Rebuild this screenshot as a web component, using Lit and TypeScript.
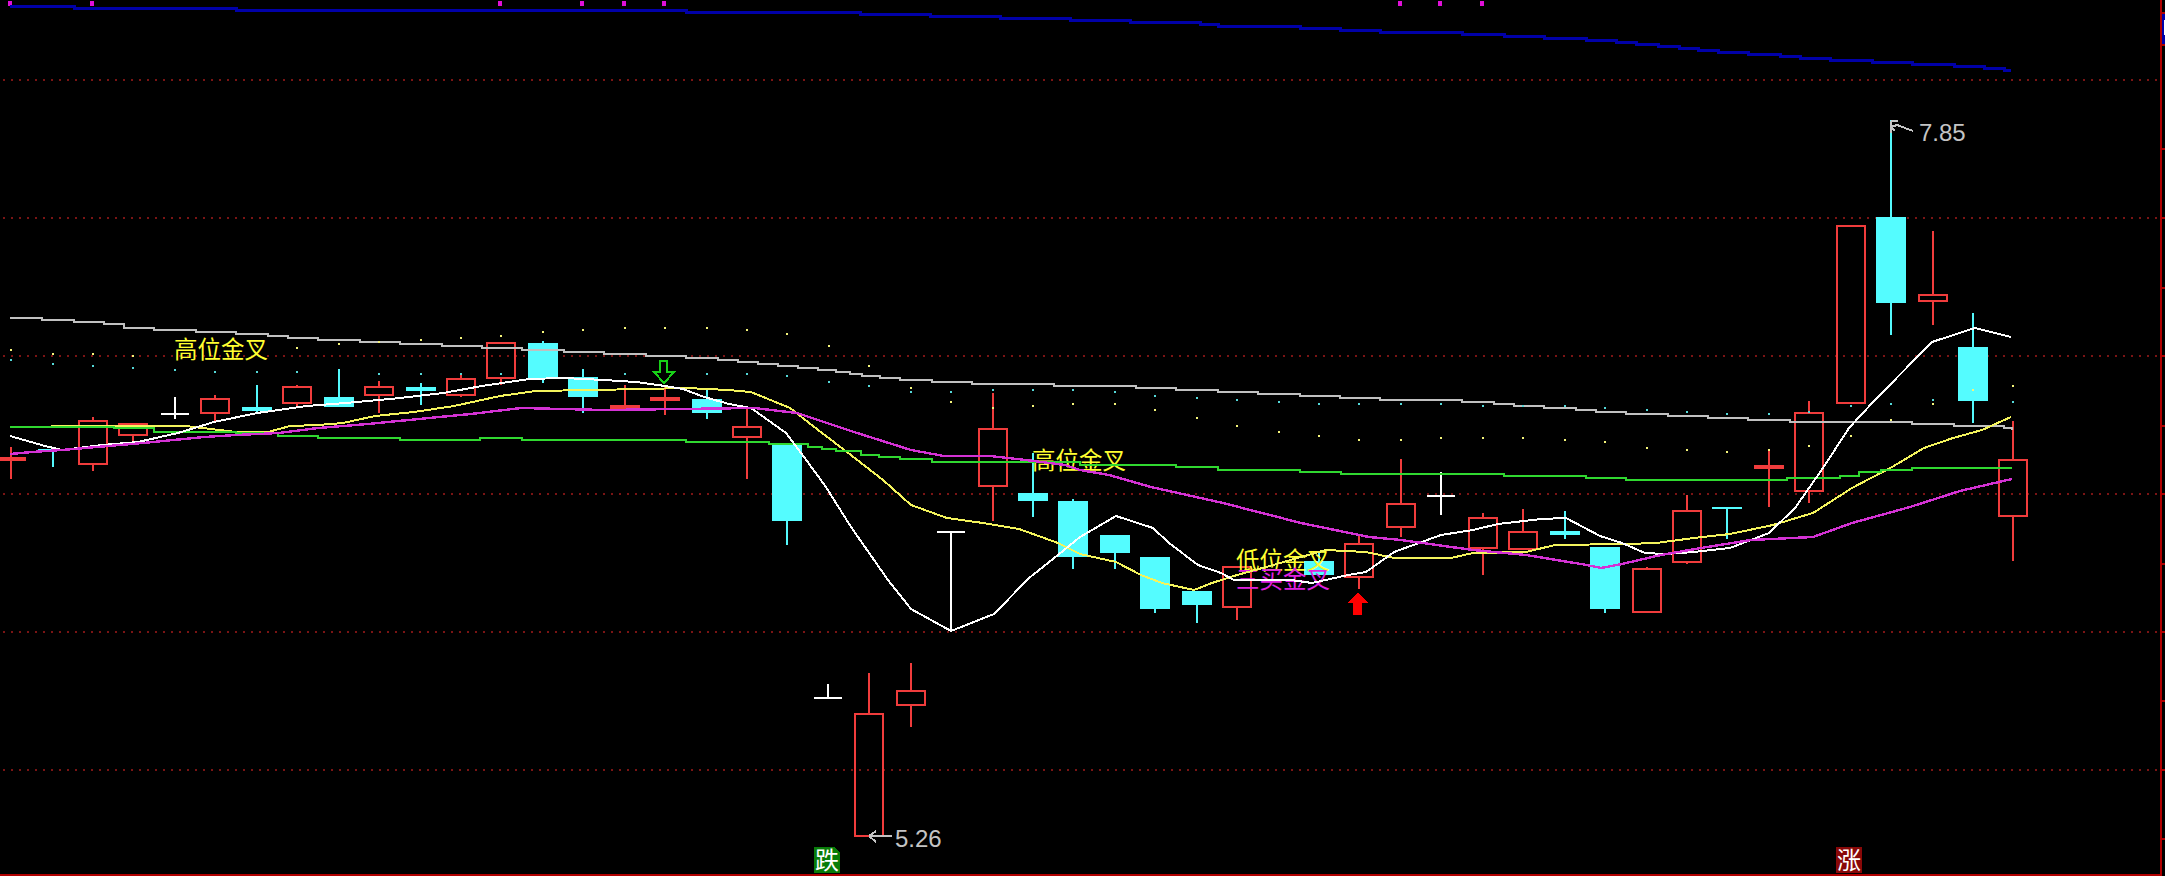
import { LitElement, html, svg, css } from "lit";
import { customElement } from "lit/decorators.js";

type Kind = "up" | "down" | "red" | "white" | "cyan";
interface Candle { x: number; hi: number; lo: number; top: number; bot: number; kind: Kind; }
type Pt = [number, number];

const c = (x: number, hi: number, lo: number, top: number, bot: number, kind: Kind): Candle => ({ x, hi, lo, top, bot, kind });

const CANDLES: Candle[] = [
  c(11, 447, 479, 457, 461, "red"), c(53, 448, 467, 449, 451, "cyan"), c(93, 417, 471, 421, 464, "up"),
  c(133, 424, 442, 424, 435, "up"), c(175, 397, 419, 413, 415, "white"), c(215, 395, 421, 399, 413, "up"),
  c(257, 385, 414, 407, 411, "down"), c(297, 385, 408, 387, 403, "up"), c(339, 369, 407, 397, 407, "down"),
  c(379, 381, 413, 387, 395, "up"), c(421, 383, 405, 387, 391, "down"), c(461, 373, 397, 379, 395, "up"),
  c(501, 343, 385, 343, 378, "up"), c(543, 341, 383, 343, 378, "down"), c(583, 369, 413, 377, 397, "down"),
  c(625, 385, 410, 405, 410, "red"), c(665, 387, 415, 397, 401, "red"), c(707, 390, 419, 399, 413, "down"),
  c(747, 407, 479, 427, 437, "up"), c(787, 443, 545, 443, 521, "down"), c(828, 684, 698, 697, 699, "white"),
  c(869, 673, 836, 714, 836, "up"), c(911, 663, 727, 691, 705, "up"), c(951, 531, 631, 531, 533, "white"),
  c(993, 393, 521, 429, 486, "up"), c(1033, 453, 517, 493, 501, "down"), c(1073, 499, 569, 501, 557, "down"),
  c(1115, 535, 569, 535, 553, "down"), c(1155, 557, 613, 557, 609, "down"), c(1197, 591, 623, 591, 605, "down"),
  c(1237, 567, 620, 567, 607, "up"), c(1319, 552, 575, 561, 575, "down"), c(1359, 534, 589, 544, 577, "up"),
  c(1401, 459, 537, 504, 527, "up"), c(1441, 472, 515, 495, 497, "white"), c(1483, 513, 575, 518, 548, "up"),
  c(1523, 509, 549, 532, 549, "up"), c(1565, 511, 539, 531, 535, "down"), c(1605, 547, 613, 547, 609, "down"),
  c(1647, 567, 612, 569, 612, "up"), c(1687, 495, 564, 511, 562, "up"), c(1727, 507, 539, 507, 509, "cyan"),
  c(1769, 449, 507, 465, 469, "red"), c(1809, 401, 503, 413, 491, "up"), c(1851, 226, 403, 226, 403, "up"),
  c(1891, 120, 335, 217, 303, "down"), c(1933, 231, 325, 295, 301, "up"), c(1973, 313, 423, 347, 401, "down"),
  c(2013, 421, 561, 460, 516, "up"),
];

const GRAY: Pt[] = [[10,318],[42,320],[74,322],[104,324],[124,328],[154,330],[196,332],[236,334],[268,336],[288,338],[318,340],[360,342],[400,344],[442,346],[482,348],[522,350],[564,352],[604,354],[646,356],[686,358],[718,360],[738,362],[758,364],[778,366],[798,368],[818,370],[836,372],[850,374],[862,376],[880,378],[900,380],[932,382],[972,384],[1054,386],[1136,388],[1176,390],[1218,392],[1258,394],[1300,396],[1340,398],[1380,400],[1462,402],[1494,404],[1514,406],[1544,408],[1576,410],[1596,412],[1626,414],[1668,416],[1708,418],[1748,420],[1790,422],[1912,424],[1954,426],[2004,428],[2012,430]];
const BLUE: Pt[] = [[10,6],[74,8],[236,10],[686,12],[860,14],[930,16],[1000,18],[1070,20],[1130,22],[1200,24],[1218,26],[1300,28],[1340,30],[1380,32],[1462,34],[1504,36],[1544,38],[1586,40],[1616,42],[1636,44],[1658,46],[1679,48],[1698,50],[1718,52],[1748,54],[1780,56],[1800,58],[1830,60],[1872,62],[1912,64],[1954,66],[1984,68],[2004,70],[2011,70]];
const GREEN: Pt[] = [[10,427],[114,428],[154,432],[236,433],[278,436],[318,438],[400,440],[480,438],[522,440],[686,442],[769,444],[808,447],[822,449],[836,451],[861,455],[879,457],[900,459],[932,462],[1080,465],[1176,467],[1218,470],[1300,472],[1341,474],[1504,476],[1586,478],[1626,480],[1787,478],[1840,476],[1859,472],[1881,470],[1912,468],[2012,468]];
const WHITE: Pt[] = [[10,436],[45,446],[62,450],[102,445],[138,442],[178,433],[214,422],[257,413],[307,406],[346,403],[400,398],[443,393],[482,386],[529,379],[563,378],[604,380],[636,382],[665,386],[683,389],[704,397],[729,404],[751,408],[772,423],[786,433],[804,457],[826,487],[851,527],[888,580],[911,609],[951,631],[994,614],[1029,578],[1058,555],[1080,537],[1116,516],[1153,528],[1169,543],[1198,565],[1221,573],[1234,580],[1291,580],[1312,583],[1348,575],[1366,572],[1394,552],[1441,535],[1473,530],[1498,524],[1541,519],[1566,518],[1600,536],[1622,543],[1645,553],[1665,554],[1694,552],[1730,548],[1769,533],[1795,508],[1823,468],[1849,428],[1874,401],[1932,342],[1975,328],[2011,337]];
const YELLOW: Pt[] = [[10,427],[32,427],[71,426],[186,426],[236,432],[268,432],[290,426],[318,425],[343,423],[375,416],[414,412],[454,406],[500,396],[536,391],[644,389],[686,388],[728,390],[751,392],[790,408],[822,433],[847,452],[883,480],[911,505],[947,518],[983,523],[1019,529],[1058,543],[1080,554],[1116,562],[1141,575],[1162,583],[1194,590],[1212,583],[1237,575],[1266,567],[1294,559],[1326,550],[1366,552],[1394,558],[1451,558],[1473,553],[1526,552],[1555,545],[1626,544],[1656,543],[1694,538],[1730,534],[1773,525],[1813,513],[1852,488],[1892,467],[1924,448],[1953,438],[1982,430],[2011,417]];
const PINK: Pt[] = [[10,454],[32,452],[62,450],[143,443],[204,437],[236,435],[279,433],[318,428],[368,424],[429,418],[471,414],[521,408],[604,410],[754,408],[797,413],[854,432],[911,450],[944,456],[990,456],[1026,460],[1065,465],[1080,470],[1109,475],[1151,487],[1223,503],[1301,523],[1369,537],[1401,540],[1437,545],[1473,550],[1526,555],[1587,565],[1601,568],[1622,564],[1661,555],[1701,548],[1751,540],[1813,537],[1852,523],[1910,507],[1960,491],[2012,479]];

const YELLOW_DOTS: Pt[] = [[11,350],[53,354],[93,354],[133,356],[297,348],[339,344],[379,342],[421,340],[461,338],[501,336],[543,332],[583,330],[625,328],[665,328],[707,328],[747,330],[787,334],[829,346],[869,366],[911,388],[951,402],[993,408],[1033,406],[1073,404],[1115,404],[1155,410],[1197,418],[1237,426],[1279,432],[1319,436],[1359,440],[1401,440],[1441,438],[1483,438],[1523,438],[1565,440],[1605,442],[1647,448],[1687,450],[1727,452],[1769,450],[1809,446],[1851,436],[1891,420],[1933,404],[1973,390],[2013,386]];
const CYAN_DOTS: Pt[] = [[11,360],[53,364],[93,366],[133,368],[175,370],[215,372],[257,372],[297,372],[379,374],[421,374],[461,374],[501,374],[625,374],[707,374],[747,374],[787,376],[829,382],[869,386],[911,392],[951,392],[993,390],[1033,390],[1073,390],[1115,392],[1155,396],[1197,398],[1237,400],[1279,402],[1319,404],[1359,404],[1401,404],[1441,404],[1483,406],[1523,406],[1565,406],[1605,408],[1647,410],[1687,412],[1727,414],[1769,414],[1809,412],[1851,406],[1891,404],[1933,400],[2013,402]];

const GRID = [80, 218, 356, 494, 632, 770];
const TICKS = [149, 218, 288, 356, 426, 494, 564, 632, 701, 770, 839];
const TOP_MARKS = [10, 92, 500, 582, 624, 664, 1400, 1440, 1482];

const poly = (p: Pt[]) => p.map((q) => q.join(",")).join(" ");
const steps = (p: Pt[]) => p.reduce((d, q, i) => (i === 0 ? `M${q[0]} ${q[1]}` : `${d}H${q[0]}V${q[1]}`), "");

@customElement("app-root")
export class AppRoot extends LitElement {
  static styles = css`
    :host { display: block; width: 2165px; height: 876px; background: #000; overflow: hidden; }
    .chart { display: block; width: 2165px; height: 876px; shape-rendering: crispEdges; }
    .grid { stroke: #7a1414; stroke-width: 2; stroke-dasharray: 2 6; fill: none; }
    .frame { stroke: #b00000; stroke-width: 2; fill: none; }
    .tick { fill: #b00000; }
    .line { fill: none; stroke-width: 2; }
    .gray { stroke: #c0c0c0; }
    .blue { stroke: #0000a8; stroke-width: 3; }
    .green { stroke: #30d830; stroke-width: 2.6; }
    .white { stroke: #ffffff; }
    .yellow { stroke: #f4f45c; }
    .pink { stroke: #d432d4; stroke-width: 2.4; }
    .wick-up, .wick-red { stroke: #f03c3c; stroke-width: 2; }
    .wick-down, .wick-cyan { stroke: #54f8fc; stroke-width: 2; }
    .wick-white { stroke: #fff; stroke-width: 2; }
    .body-up { fill: none; stroke: #f03c3c; stroke-width: 2; }
    .body-red { fill: #f03c3c; }
    .body-down, .body-cyan { fill: #54fcff; }
    .body-white { fill: #fff; }
    .dot-y { fill: #f4f47a; }
    .dot-c { fill: #54d8d8; }
    .mark { fill: #e010d8; }
    .label { font-family: "Noto Sans CJK SC", "Noto Sans CJK JP", sans-serif; font-size: 23.5px; shape-rendering: auto; }
    .label-yellow { fill: #ffff30; }
    .label-pink { fill: #e020e0; }
    .value { font-family: "Liberation Sans", Arial, sans-serif; font-size: 24px; fill: #c4c4c4; }
    .pointer { fill: none; stroke: #c4c4c4; stroke-width: 2; }
    .arrow-down { fill: none; stroke: #18d018; stroke-width: 2; }
    .arrow-up { fill: #ff0000; }
    .badge-fall { fill: #087c08; }
    .badge-rise { fill: #880808; }
    .badge-text { font-family: "Noto Sans CJK SC", "Noto Sans CJK JP", sans-serif; font-size: 24px; fill: #fff; font-weight: 400; }
    .edge-blue { fill: #0000a8; }
    .edge-white { fill: #fff; }
  `;

  private candle(k: Candle) {
    const w = k.kind === "white" ? 28 : 30;
    const wick = k.kind === "up"
      ? svg`<line class="wick-up" x1=${k.x} x2=${k.x} y1=${k.hi} y2=${k.top}></line><line class="wick-up" x1=${k.x} x2=${k.x} y1=${k.bot} y2=${k.lo}></line>`
      : svg`<line class="wick-${k.kind}" x1=${k.x} x2=${k.x} y1=${k.hi} y2=${k.lo}></line>`;
    const body = k.kind === "up"
      ? svg`<rect class="body-up" x=${k.x - 14} y=${k.top} width="28" height=${k.bot - k.top}></rect>`
      : svg`<rect class="body-${k.kind}" x=${k.x - w / 2} y=${k.top} width=${w} height=${k.bot - k.top}></rect>`;
    return svg`${wick}${body}`;
  }

  render() {
    return html`
      <svg class="chart" viewBox="0 0 2165 876" xmlns="http://www.w3.org/2000/svg">
        ${GRID.map((y) => svg`<line class="grid" x1="3" x2="2160" y1=${y} y2=${y}></line>`)}
        <path class="frame" d="M2161 0V875H0"></path>
        ${TICKS.map((y) => svg`<rect class="tick" x="2161" y=${y - 1} width="4" height="2"></rect>`)}
        <rect class="tick" x="2161" y="12" width="4" height="34"></rect>
        <rect class="edge-blue" x="2162" y="14" width="3" height="30"></rect>
        <rect class="edge-white" x="2164" y="20" width="1" height="15"></rect>
        ${TOP_MARKS.map((x) => svg`<rect class="mark" x=${x - 2} y="1" width="4" height="5"></rect>`)}

        ${CANDLES.map((k) => this.candle(k))}

        <text class="label label-yellow" x="174" y="358">高位金叉</text>
        <text class="label label-yellow" x="1032" y="469">高位金叉</text>
        <text class="label label-yellow" x="1236" y="569">低位金叉</text>
        <text class="label label-pink" x="1236" y="588">三买金叉</text>

        <path class="line blue" d=${steps(BLUE)}></path>
        <path class="line gray" d=${steps(GRAY)}></path>
        <polyline class="line yellow" points=${poly(YELLOW)}></polyline>
        <path class="line green" d=${steps(GREEN)}></path>
        <polyline class="line white" points=${poly(WHITE)}></polyline>
        <polyline class="line pink" points=${poly(PINK)}></polyline>

        ${YELLOW_DOTS.map(([x, y]) => svg`<rect class="dot-y" x=${x - 1} y=${y - 1} width="2" height="2"></rect>`)}
        ${CYAN_DOTS.map(([x, y]) => svg`<rect class="dot-c" x=${x - 1} y=${y - 1} width="2" height="2"></rect>`)}

        <path class="arrow-down" d="M660 361H667V372H674L664 383L654 372H660Z"></path>
        <path class="arrow-up" d="M1358 592L1368 603H1362V615H1353V603H1348Z"></path>

        <path class="pointer" d="M1891 121H1898M1891 127V133M1891 121V127L1897 125L1913 131M1891 127L1895 131"></path>
        <text class="value" x="1919" y="141">7.85</text>
        <path class="pointer" d="M869 836H892M869 836L876 831M869 836L876 842"></path>
        <text class="value" x="895" y="847">5.26</text>

        <path class="badge-fall" d="M814 847H834L840 853V873H814Z"></path>
        <text class="badge-text" x="815" y="869">跌</text>
        <rect class="badge-rise" x="1836" y="847" width="26" height="26"></rect>
        <text class="badge-text" x="1837" y="869">涨</text>
      </svg>
    `;
  }
}
